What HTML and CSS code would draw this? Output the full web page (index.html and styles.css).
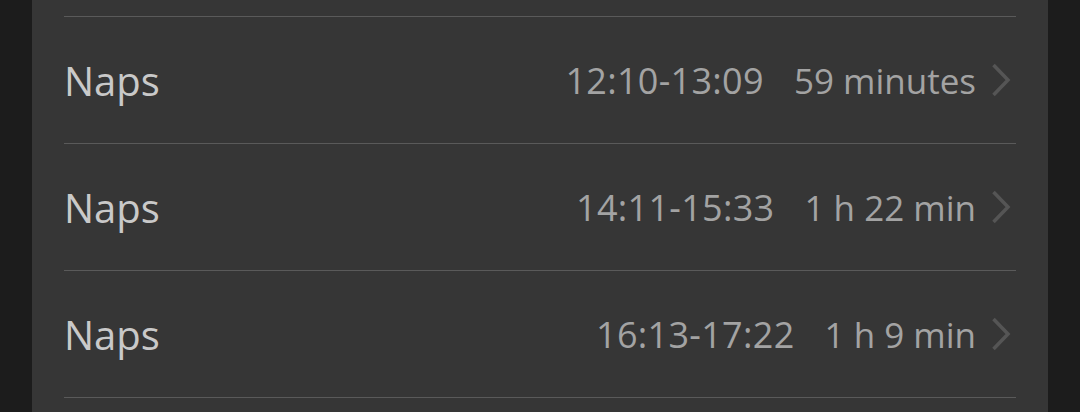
FILE: index.html
```html
<!DOCTYPE html>
<html lang="en">
<head>
<meta charset="UTF-8" />
<meta name="viewport" content="width=device-width, initial-scale=1" />
<title>Sleep log</title>
<link rel="stylesheet" href="styles.css">
</head>
<body>
  <div class="panel">
    <div class="list">
      <div class="row">
        <span class="label">Naps</span>
        <span class="time">12:10-13:09</span>
        <span class="duration">59 minutes</span>
        <svg class="chevron" width="20" height="34" viewBox="0 0 20 34"><path d="M2.5 2 L17 17 L2.5 32" /></svg>
      </div>
      <div class="row">
        <span class="label">Naps</span>
        <span class="time">14:11-15:33</span>
        <span class="duration">1 h 22 min</span>
        <svg class="chevron" width="20" height="34" viewBox="0 0 20 34"><path d="M2.5 2 L17 17 L2.5 32" /></svg>
      </div>
      <div class="row">
        <span class="label">Naps</span>
        <span class="time">16:13-17:22</span>
        <span class="duration">1 h 9 min</span>
        <svg class="chevron" width="20" height="34" viewBox="0 0 20 34"><path d="M2.5 2 L17 17 L2.5 32" /></svg>
      </div>
    </div>
  </div>
</body>
</html>
```

FILE: styles.css
```css
html, body {
  margin: 0;
  height: 100%;
}
body {
  background: #1c1c1c;
  font-family: 'Open Sans', Roboto, sans-serif;
  overflow: hidden;
}
.panel {
  margin: 0 32px;
  min-height: 100%;
  background: #363636;
  padding: 16px 32px 0;
  box-sizing: border-box;
}
.list {
  border-bottom: 1px solid #5a5a5a;
}
.row {
  display: flex;
  align-items: center;
  height: 126px;
  border-top: 1px solid #5a5a5a;
}
.label {
  flex: 1;
  font-size: 40px;
  color: #c9c9c9;
}
.time, .duration {
  color: #a3a3a3;
}
.time {
  font-size: 36px;
  letter-spacing: 0.3px;
}
.duration {
  font-size: 35px;
  margin-left: 30px;
}
.chevron {
  margin-left: 15px;
  margin-right: 5px;
  fill: none;
  stroke: #555;
  stroke-width: 3.5;
}
```
